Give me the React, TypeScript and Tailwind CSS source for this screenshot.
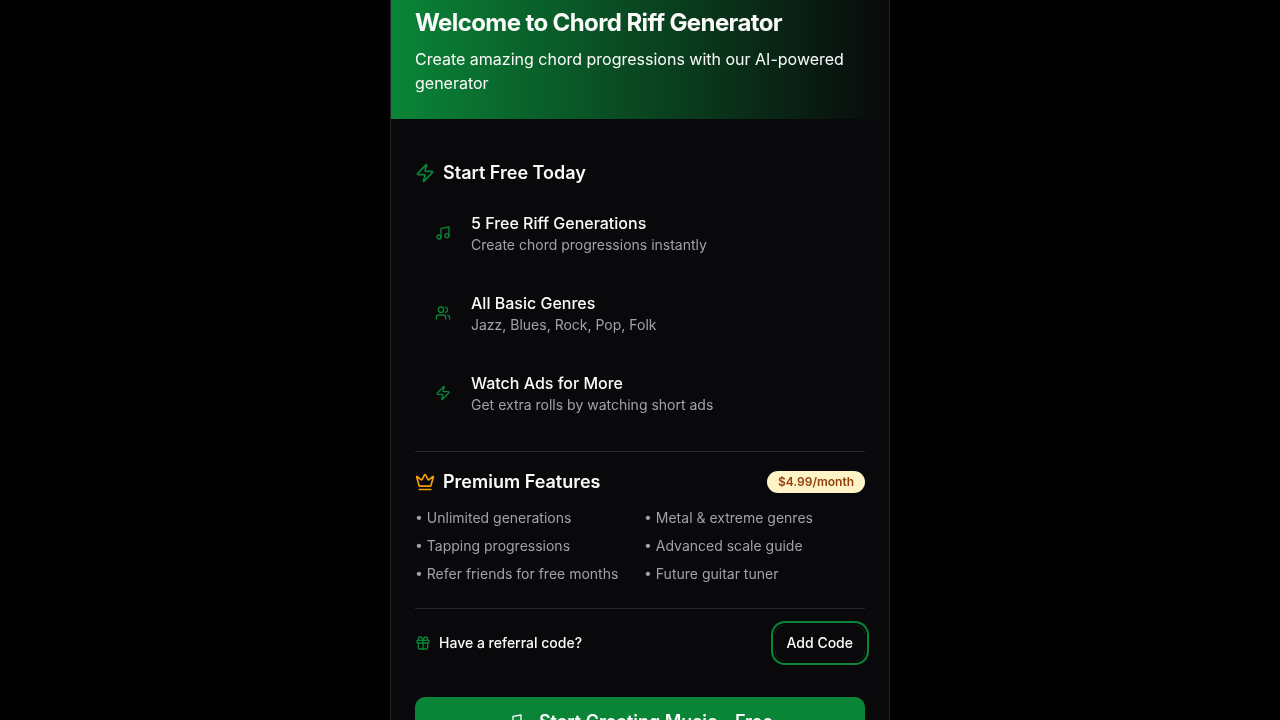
import React from "react";
import { Zap, Music, Users, Crown, Gift } from "lucide-react";

const features = [
  { Icon: Music, title: "5 Free Riff Generations", text: "Create chord progressions instantly" },
  { Icon: Users, title: "All Basic Genres", text: "Jazz, Blues, Rock, Pop, Folk" },
  { Icon: Zap, title: "Watch Ads for More", text: "Get extra rolls by watching short ads" },
];

const premium = [
  "Unlimited generations",
  "Metal & extreme genres",
  "Tapping progressions",
  "Advanced scale guide",
  "Refer friends for free months",
  "Future guitar tuner",
];

export default function App() {
  return (
    <div className="flex h-screen justify-center overflow-hidden bg-black font-['Inter',sans-serif] text-[#fafafa] antialiased">
      <div className="h-[800px] w-[500px] shrink-0 border-x border-[#27272a] bg-[#09090b] will-change-transform">
        <header className="h-[119px] bg-linear-to-r/srgb from-[#0a8537] to-[#09090b] px-6 pt-[7px]">
          <h1 className="text-2xl font-bold tracking-tight">Welcome to Chord Riff Generator</h1>
          <p className="mt-2 text-base">Create amazing chord progressions with our AI-powered generator</p>
        </header>
        <main className="px-6 pt-10">
          <h2 className="flex items-center gap-2 text-lg leading-7 font-semibold">
            <Zap className="size-5 text-[#0a8537]" />
            Start Free Today
          </h2>
          <div className="mt-3 flex flex-col gap-3">
            {features.map(({ Icon, title, text }) => (
              <div key={title} className="flex h-[68px] items-center gap-3 px-3">
                <div className="flex size-8 items-center justify-center">
                  <Icon className="size-4 text-[#0a8537]" />
                </div>
                <div>
                  <p className="text-base font-medium">{title}</p>
                  <p className="text-sm text-[#a1a1aa]">{text}</p>
                </div>
              </div>
            ))}
          </div>
          <hr className="mt-6 border-[#27272a]" />
          <div className="mt-4 flex items-center justify-between">
            <h2 className="flex items-center gap-2 text-lg leading-7 font-semibold">
              <Crown className="size-5 text-[#f59e0b]" />
              Premium Features
            </h2>
            <span className="rounded-full border border-transparent bg-[#fef3c7] px-2.5 py-0.5 text-xs font-semibold text-[#92400e]">
              $4.99/month
            </span>
          </div>
          <div className="mt-3 grid grid-cols-2 gap-2 text-sm text-[#a1a1aa]">
            {premium.map((p) => (
              <div key={p}>• {p}</div>
            ))}
          </div>
          <hr className="mt-6 border-[#27272a]" />
          <div className="mt-4 flex items-center justify-between">
            <p className="flex items-center gap-2 text-sm font-medium">
              <Gift className="size-4 text-[#0a8537]" />
              Have a referral code?
            </p>
            <button className="h-9 rounded-[10px] px-3 text-sm font-medium ring-2 ring-[#0a8537] ring-offset-2 ring-offset-[#09090b]">
              Add Code
            </button>
          </div>
          <button className="mt-9 flex h-12 w-full items-center justify-center gap-4 rounded-[10px] bg-[#0a8537] text-lg font-semibold">
            <Music className="size-4" />
            <span className="mt-px">Start Creating Music - Free</span>
          </button>
        </main>
      </div>
    </div>
  );
}
